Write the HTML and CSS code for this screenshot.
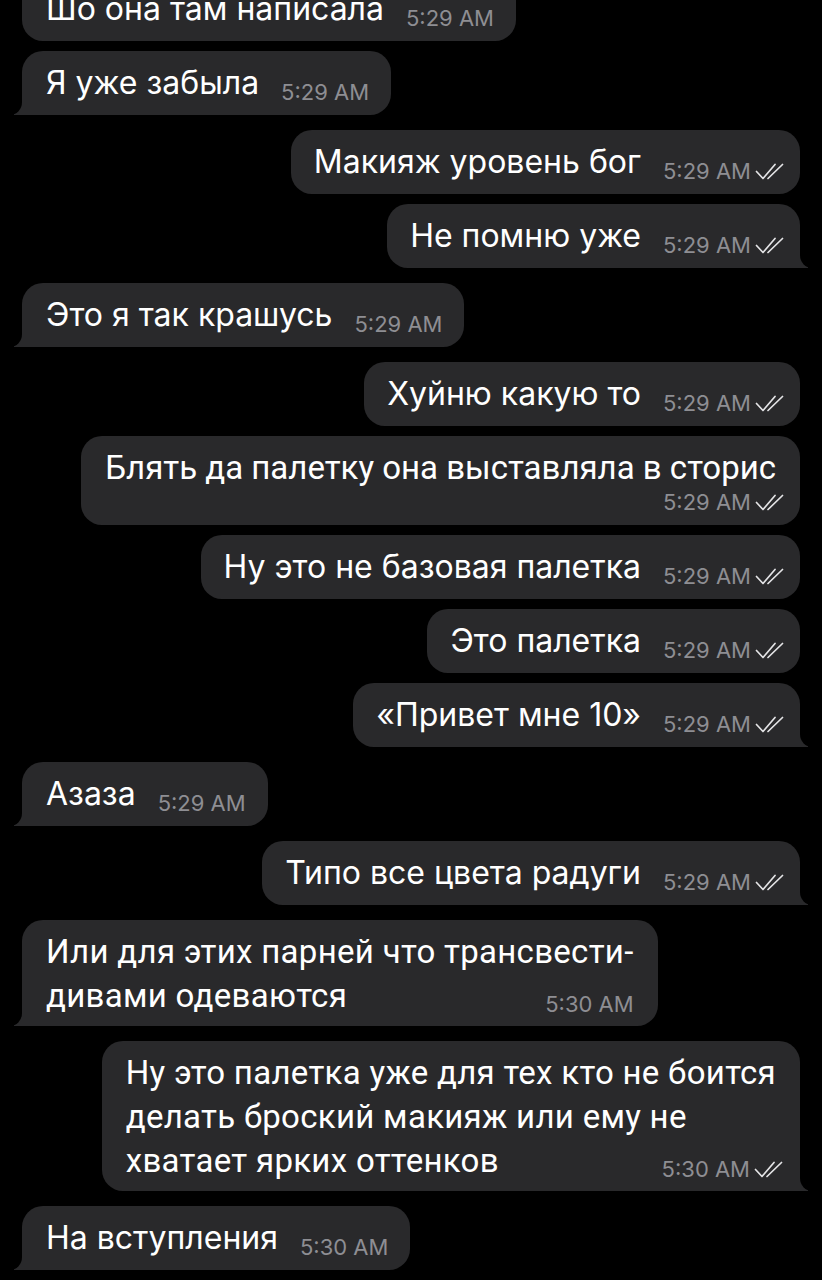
FILE: index.html
```html
<!DOCTYPE html>
<html lang="ru">
<head>
    <meta charset="UTF-8">
    <meta name="viewport" content="width=device-width, initial-scale=1.0">
    <title>Chat</title>
    <link rel="stylesheet" href="styles.css">
</head>
<body>
    <div class="chat">
        <div class="msg in">Шо она там написала<span class="meta">5:29 AM</span></div>
        <div class="msg in tail">Я уже забыла<span class="meta">5:29 AM</span></div>

        <div class="msg out">Макияж уровень бог<span class="meta">5:29 AM<svg viewBox="0 0 29 17"><path d="M1.5 8.5 L8 15.5 L20 1.5 M13 15.5 L27.5 1.5"/></svg></span></div>
        <div class="msg out tail">Не помню уже<span class="meta">5:29 AM<svg viewBox="0 0 29 17"><path d="M1.5 8.5 L8 15.5 L20 1.5 M13 15.5 L27.5 1.5"/></svg></span></div>

        <div class="msg in tail">Это я так крашусь<span class="meta">5:29 AM</span></div>

        <div class="msg out">Хуйню какую то<span class="meta">5:29 AM<svg viewBox="0 0 29 17"><path d="M1.5 8.5 L8 15.5 L20 1.5 M13 15.5 L27.5 1.5"/></svg></span></div>
        <div class="msg out narrow two">Блять да палетку она выставляла в сторис<span class="meta below">5:29 AM<svg viewBox="0 0 29 17"><path d="M1.5 8.5 L8 15.5 L20 1.5 M13 15.5 L27.5 1.5"/></svg></span></div>
        <div class="msg out">Ну это не базовая палетка<span class="meta">5:29 AM<svg viewBox="0 0 29 17"><path d="M1.5 8.5 L8 15.5 L20 1.5 M13 15.5 L27.5 1.5"/></svg></span></div>
        <div class="msg out">Это палетка<span class="meta">5:29 AM<svg viewBox="0 0 29 17"><path d="M1.5 8.5 L8 15.5 L20 1.5 M13 15.5 L27.5 1.5"/></svg></span></div>
        <div class="msg out tail">«Привет мне 10»<span class="meta">5:29 AM<svg viewBox="0 0 29 17"><path d="M1.5 8.5 L8 15.5 L20 1.5 M13 15.5 L27.5 1.5"/></svg></span></div>

        <div class="msg in tail">Азаза<span class="meta">5:29 AM</span></div>

        <div class="msg out tail">Типо все цвета радуги<span class="meta">5:29 AM<svg viewBox="0 0 29 17"><path d="M1.5 8.5 L8 15.5 L20 1.5 M13 15.5 L27.5 1.5"/></svg></span></div>

        <div class="msg in tail narrow multi">Или для этих парней что трансвести-<br>дивами одеваются<span class="meta end">5:30 AM</span></div>

        <div class="msg out tail narrow multi">Ну это палетка уже для тех кто не боится<br>делать броский макияж или ему не<br>хватает ярких оттенков<span class="meta end">5:30 AM<svg viewBox="0 0 29 17"><path d="M1.5 8.5 L8 15.5 L20 1.5 M13 15.5 L27.5 1.5"/></svg></span></div>

        <div class="msg in tail">На вступления<span class="meta">5:30 AM</span></div>
    </div>
</body>
</html>
```

FILE: styles.css
```css
* {
    margin: 0;
    padding: 0;
    box-sizing: border-box;
}

body {
    background-color: #000;
    color: #fff;
    font-family: Inter, "Noto Sans", sans-serif;
}

.chat {
    display: flex;
    flex-direction: column;
    align-items: flex-start;
    padding: 0 22px;
    margin-top: -23px;
}

/* bubbles */
.msg {
    position: relative;
    background-color: #29292b;
    border-radius: 21px;
    padding: 10px 22px 10px 24px;
    font-size: 32px;
    line-height: 44px;
}

.msg + .msg {
    margin-top: 10px;
}

.in + .out,
.out + .in {
    margin-top: 15px;
}

.out {
    align-self: flex-end;
    padding: 10px 16px 10px 23px;
}

.narrow {
    font-family: Roboto, "Liberation Sans", sans-serif;
    font-size: 33px;
    letter-spacing: 0.3px;
    padding-left: 24px;
    padding-right: 24px;
}

.two {
    padding-bottom: 11px;
    letter-spacing: 0;
}

.multi {
    padding-bottom: 8px;
}

/* time + checks */
.meta {
    display: inline-block;
    margin-left: 22px;
    font-family: Inter, "Noto Sans", sans-serif;
    font-size: 22px;
    letter-spacing: 0;
    line-height: 20px;
    color: #8e8e93;
    vertical-align: -6px;
    white-space: nowrap;
}

.meta svg {
    width: 29px;
    height: 17px;
    margin-left: 4px;
    vertical-align: -1px;
    fill: none;
    stroke: #e4e4e6;
    stroke-width: 1.7;
    stroke-linecap: round;
    stroke-linejoin: round;
}

.meta.end {
    float: right;
    margin-top: 20px;
}

.out .meta.end {
    margin-right: -7px;
}

.meta.below {
    display: block;
    text-align: right;
    margin: 0;
    line-height: 24px;
    margin-right: -8px;
}

/* bubble tails */
.tail::before,
.tail::after {
    content: "";
    position: absolute;
    bottom: 0;
    height: 14px;
}

.in.tail {
    border-bottom-left-radius: 0;
}

.in.tail::before {
    left: -8px;
    width: 8px;
    background-color: #29292b;
}

.in.tail::after {
    left: -20px;
    width: 20px;
    background-color: #000;
    border-bottom-right-radius: 12px 13px;
}

.out.tail {
    border-bottom-right-radius: 0;
}

.out.tail::before {
    right: -8px;
    width: 8px;
    background-color: #29292b;
}

.out.tail::after {
    right: -20px;
    width: 20px;
    background-color: #000;
    border-bottom-left-radius: 12px 13px;
}
```
